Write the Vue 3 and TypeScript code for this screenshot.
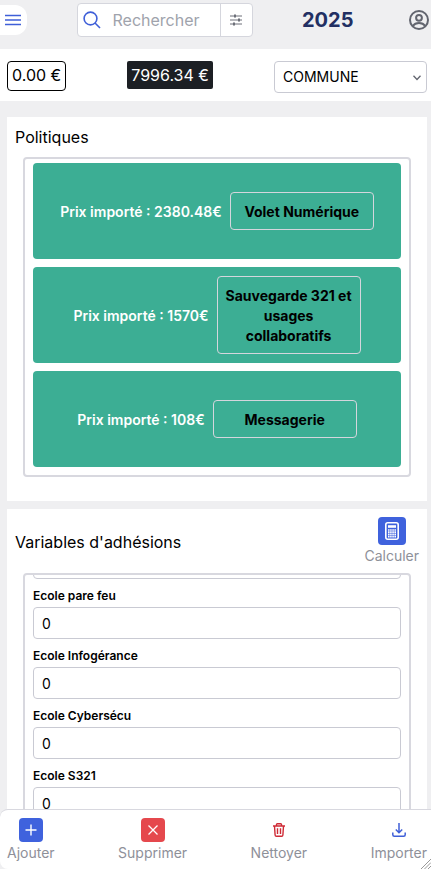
<script setup lang="ts">
import { onMounted, ref } from 'vue'

interface Policy {
  name: string
  price: string
}

interface Variable {
  id: string
  label?: string
  value: string
}

const search = ref('')
const kind = ref('COMMUNE')
const variableList = ref<HTMLElement | null>(null)

const policies: Policy[] = [
  { name: 'Volet Numérique', price: '2380.48' },
  { name: 'Sauvegarde 321 et usages collaboratifs', price: '1570' },
  { name: 'Messagerie', price: '108' },
]

const variables = ref<Variable[]>([
  { id: 'ecole', value: '' },
  { id: 'ecole-pare-feu', label: 'Ecole pare feu', value: '0' },
  { id: 'ecole-infogerance', label: 'Ecole Infogérance', value: '0' },
  { id: 'ecole-cybersecu', label: 'Ecole Cybersécu', value: '0' },
  { id: 'ecole-s321', label: 'Ecole S321', value: '0' },
])

onMounted(() => {
  // Bring the named school variables into view.
  if (variableList.value) variableList.value.scrollTop = 36
})
</script>

<template>
  <div class="page">
    <header class="topbar">
      <button class="menu" type="button" aria-label="Menu">
        <svg width="16" height="12" viewBox="0 0 16 12" stroke="#3f5fd8" stroke-width="1.700">
          <path d="M0 1.500h16M0 6h16M0 10.500h16" />
        </svg>
      </button>
      <div class="search">
        <svg class="search-icon" width="18" height="18" viewBox="0 0 18 18" fill="none" stroke="#3f5fd8" stroke-width="1.6">
          <circle cx="7.5" cy="7.5" r="6.4" />
          <path d="M12 12l5 5" />
        </svg>
        <input v-model="search" type="text" aria-label="Rechercher" placeholder="Rechercher" />
        <button class="filter" type="button" aria-label="Filtres">
          <svg width="12" height="12" viewBox="0 0 12 12" fill="none" stroke="#6c6f78" stroke-width="1">
            <path d="M0 2h12M0 6h12M0 10h12" />
            <path d="M5 .5v3M9 4.5v3M4 8.5v3" stroke-width="2" />
          </svg>
        </button>
      </div>
      <h1 class="year">2025</h1>
      <button class="account" type="button" aria-label="Compte">
        <svg width="20" height="20" viewBox="0 0 20 20" fill="none" stroke="#62656f" stroke-width="2">
          <circle cx="10" cy="10" r="9" />
          <circle cx="10" cy="7.8" r="2.900" />
          <path d="M3.800 16c1.500-2.200 3.700-3 6.200-3s4.700.8 6.200 3" />
        </svg>
      </button>
    </header>

    <section class="summary">
      <span class="amount">0.00 €</span>
      <span class="amount dark">7996.34 €</span>
      <div class="select">
        <select v-model="kind" aria-label="Type de collectivité">
          <option>COMMUNE</option>
        </select>
        <svg class="chevron" width="8" height="6" viewBox="0 0 8 6" fill="none" stroke="#62656f" stroke-width="1.300">
          <path d="M.5 .8L4 4.500L7.500 .8" />
        </svg>
      </div>
    </section>

    <main class="content">
      <section class="card">
        <h2>Politiques</h2>
        <div class="box policies">
          <article v-for="policy in policies" :key="policy.name" class="policy">
            <span>Prix importé : {{ policy.price }}€</span>
            <button type="button">{{ policy.name }}</button>
          </article>
        </div>
      </section>

      <section class="card">
        <div class="card-head">
          <h2>Variables d'adhésions</h2>
          <button class="action" type="button">
            <span class="tile large blue">
              <svg width="14" height="18" viewBox="0 0 14 18" fill="none" stroke="#fff">
                <rect x=".8" y=".8" width="12.400" height="16.400" rx="2" stroke-width="1.600" />
                <path d="M3 4.500h8" stroke-width="2.600" />
                <path d="M3 8h8M3 10.200h8M3 12.400h8M3 14.600h8" stroke-width="1.700" stroke-dasharray="1.600 .53" />
              </svg>
            </span>
            Calculer
          </button>
        </div>
        <div ref="variableList" class="box variables">
          <div v-for="item in variables" :key="item.id" class="field">
            <label v-if="item.label" :for="item.id">{{ item.label }}</label>
            <input
              :id="item.id"
              v-model="item.value"
              type="text"
              inputmode="numeric"
              :aria-label="item.label ? undefined : 'Ecole'"
            />
          </div>
        </div>
      </section>
    </main>

    <footer class="actions">
      <button class="action" type="button">
        <span class="tile blue">
          <svg width="12" height="12" viewBox="0 0 12 12" stroke="#fff" stroke-width="1.400"><path d="M6 .5v11M.5 6h11" /></svg>
        </span>
        Ajouter
      </button>
      <button class="action" type="button">
        <span class="tile red">
          <svg width="10" height="10" viewBox="0 0 10 10" stroke="#fff" stroke-width="1.300"><path d="M.5 .5l9 9M9.500 .5l-9 9" /></svg>
        </span>
        Supprimer
      </button>
      <button class="action" type="button">
        <span class="tile">
          <svg width="12" height="14" viewBox="0 0 12 14" fill="none" stroke="#cf2a35" stroke-width="1.400">
            <path d="M0 3h12M3.500 3V1.500q0-.8.8-.8h3.400q.8 0 .8.800V3M1.500 3l.6 9q.1 1.300 1.300 1.300h5.200q1.200 0 1.300-1.300l.6-9M4.500 5.300v5.700M7.500 5.300v5.700" />
          </svg>
        </span>
        Nettoyer
      </button>
      <button class="action" type="button">
        <span class="tile">
          <svg width="14" height="14" viewBox="0 0 14 14" fill="none" stroke="#3f5fd8" stroke-width="1.500">
            <path d="M7 0v9.500M3.800 6.500L7 9.700l3.200-3.200M.8 9.500v2.200q0 1.500 1.500 1.500h9.400q1.500 0 1.500-1.500V9.500" />
          </svg>
        </span>
        Importer
      </button>
      <svg class="grip" width="10" height="10" viewBox="0 0 10 10" stroke="#999" stroke-width="1">
        <path d="M0 10L10 0M3.500 10L10 3.500M7 10l3-3" />
      </svg>
    </footer>
  </div>
</template>

<style>
body {
  background: #efeff1;
}
</style>

<style scoped>
.page,
.page * {
  box-sizing: border-box;
}

.page {
  height: 100vh;
  overflow: hidden;
  display: flex;
  flex-direction: column;
  background: #efeff1;
  color: #000;
  font-family: Inter, 'Liberation Sans', sans-serif;
  font-size: 16px;
  line-height: 24px;
}

button,
input,
select {
  font: inherit;
  color: inherit;
  margin: 0;
}

button {
  padding: 0;
  border: 0;
  background: none;
  cursor: pointer;
}

svg {
  display: block;
  flex: none;
}

h1,
h2 {
  margin: 0;
}

.topbar {
  flex: none;
  height: 49px;
  padding: 0 2px 10px 0;
  display: flex;
  align-items: center;
  justify-content: space-between;
}

.menu {
  width: 27px;
  height: 30px;
  padding-left: 5px;
  border-radius: 0 12px 12px 0;
  background: #fff;
}

.search {
  width: 176px;
  height: 34px;
  display: flex;
  align-items: center;
  border: 1px solid #d5d6dd;
  border-radius: 4px;
  background: #fff;
}

.search-icon {
  margin: 0 12px 0 5px;
}

.search input {
  flex: 1;
  min-width: 0;
  padding: 0;
  border: 0;
  outline: 0;
  background: none;
}

.search input::placeholder {
  color: #a0a3ac;
  opacity: 1;
}

.filter {
  width: 32px;
  height: 100%;
  display: flex;
  align-items: center;
  justify-content: center;
  border-left: 1px solid #d5d6dd;
}

.year {
  padding-right: 6px;
  color: #222f63;
  font-size: 20px;
  font-weight: 700;
}

.summary {
  flex: none;
  height: 52px;
  padding: 12px 4px 8px 7px;
  display: flex;
  justify-content: space-between;
  align-items: flex-start;
  background: #fff;
}

.amount {
  height: 30px;
  padding: 0 4px;
  border: 1px solid #000;
  border-radius: 4px;
  line-height: 26px;
}

.amount.dark {
  height: 28px;
  border: 0;
  border-radius: 2px;
  background: #1c1f24;
  color: #fff;
  line-height: 28px;
}

.select {
  position: relative;
  width: 153px;
}

.select select {
  display: block;
  width: 100%;
  height: 32px;
  padding: 0 24px 0 8px;
  appearance: none;
  border: 1px solid #c9cad3;
  border-radius: 4px;
  background: #fff;
  font-size: 14px;
}

.chevron {
  position: absolute;
  right: 6px;
  top: 14px;
  pointer-events: none;
}

.content {
  flex: 1;
  min-height: 0;
  padding: 16px 4px 0 7px;
  overflow: hidden;
}

.card {
  margin-bottom: 8px;
  padding: 8px 8px 24px;
  background: #fff;
}

.card h2 {
  font-size: 16px;
  font-weight: 400;
}

.box {
  margin: 8px 8px 0;
  padding: 8px;
  border: 2px solid #d8d8df;
  border-radius: 4px;
}

.policies {
  display: grid;
  gap: 8px;
  padding-top: 4px;
}

.policy {
  min-height: 96px;
  display: flex;
  align-items: center;
  justify-content: center;
  gap: 8px;
  border-radius: 4px;
  background: #3cae94;
  color: #fff;
  font-size: 14px;
  font-weight: 600;
  line-height: 20px;
}

.policy span {
  padding-top: 2px;
}

.policy button {
  width: 144px;
  min-height: 38px;
  padding: 9px 8px 7px;
  border: 1px solid #d5d6dd;
  border-radius: 4px;
  color: #000;
  font-weight: 700;
}

.card-head {
  display: flex;
  align-items: center;
  justify-content: space-between;
}

.action {
  display: flex;
  flex-direction: column;
  align-items: center;
  color: #8e9099;
  font-size: 14px;
  line-height: 22px;
}

.tile {
  width: 24px;
  height: 24px;
  display: flex;
  align-items: center;
  justify-content: center;
  border-radius: 4px;
}

.tile.large {
  width: 28px;
  height: 28px;
}

.tile.blue {
  background: #3f62dd;
}

.tile.red {
  background: #e5484d;
}

.variables {
  height: 248px;
  display: flex;
  flex-direction: column;
  gap: 8px;
  margin-top: 6px;
  overflow-y: auto;
  scrollbar-width: none;
}

.field {
  flex: none;
  display: flex;
  flex-direction: column;
}

.field label {
  height: 20px;
  font-size: 12px;
  font-weight: 600;
  line-height: 18px;
}

.field input {
  width: 100%;
  height: 32px;
  padding: 0 8px;
  border: 1px solid #c9cad3;
  border-radius: 4px;
  background: #fff;
  font-size: 14px;
}

.actions {
  position: fixed;
  right: 0;
  bottom: 0;
  left: 0;
  height: 60px;
  padding: 8px 4px 0 7px;
  display: flex;
  align-items: flex-start;
  justify-content: space-between;
  border-top: 1px solid #d8d8df;
  border-radius: 8px 0 0 8px;
  background: #fff;
}

.grip {
  position: absolute;
  right: 0;
  bottom: 0;
}
</style>
